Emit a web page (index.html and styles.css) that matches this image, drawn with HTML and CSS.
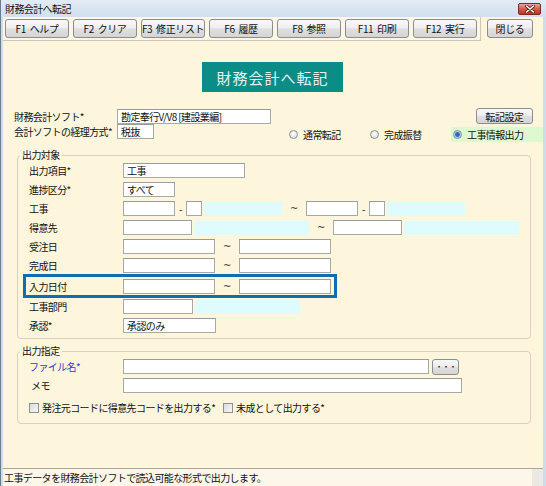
FILE: index.html
```html
<!DOCTYPE html>
<html lang="ja">
<head>
  <meta charset="UTF-8">
  <title>財務会計へ転記</title>
  <link rel="stylesheet" href="styles.css">
</head>
<body>

  <div class="window">
    <div class="titlebar">
      <span class="title">財務会計へ転記</span>
      <span class="xbox">
        <svg width="10" height="8" viewBox="0 0 10 8">
          <path d="M1.5 1 L8.5 7 M8.5 1 L1.5 7" stroke="#5a1a12" stroke-width="3" stroke-linecap="round"/>
          <path d="M1.5 1 L8.5 7 M8.5 1 L1.5 7" stroke="#fff" stroke-width="1.6" stroke-linecap="round"/>
        </svg>
      </span>
    </div>

    <div class="client">
      <div class="toolbar">
        <div class="fkeys">
          <button class="btn fkey">F1 ヘルプ</button>
          <button class="btn fkey">F2 クリア</button>
          <button class="btn fkey">F3 修正リスト</button>
          <button class="btn fkey">F6 履歴</button>
          <button class="btn fkey">F8 参照</button>
          <button class="btn fkey">F11 印刷</button>
          <button class="btn fkey">F12 実行</button>
        </div>
        <button class="btn btn-close">閉じる</button>
      </div>

      <div class="content">
        <div class="heading">財務会計へ転記</div>

        <div class="top-row">
          <span class="top-label">財務会計ソフト*</span>
          <span class="field w154">勘定奉行V/V8 [建設業編]</span>
          <button class="btn btn-setting">転記設定</button>
        </div>

        <div class="top-row row2">
          <span class="top-label">会計ソフトの経理方式*</span>
          <span class="field w37">税抜</span>
          <div class="radios">
            <div class="opt"><span class="radio"></span>通常転記</div>
            <div class="opt"><span class="radio"></span>完成振替</div>
            <div class="opt opt-on"><span class="radio on"></span>工事情報出力</div>
          </div>
        </div>

        <fieldset class="group">
          <legend>出力対象</legend>
          <div class="rows">
            <div class="row">
              <span class="lbl">出力項目*</span>
              <span class="field w122">工事</span>
            </div>
            <div class="row">
              <span class="lbl">進捗区分*</span>
              <span class="field w52">すべて</span>
            </div>
            <div class="row">
              <span class="lbl">工事</span>
              <span class="field w52"></span>
              <span class="sep">-</span>
              <span class="field w16"></span>
              <span class="cyan w78"></span>
              <span class="tilde">~</span>
              <span class="field w52"></span>
              <span class="sep">-</span>
              <span class="field w16"></span>
              <span class="cyan w78"></span>
            </div>
            <div class="row">
              <span class="lbl">得意先</span>
              <span class="field w69"></span>
              <span class="cyan w116"></span>
              <span class="tilde">~</span>
              <span class="field w69"></span>
              <span class="cyan w116"></span>
            </div>
            <div class="row">
              <span class="lbl">受注日</span>
              <span class="field w92"></span>
              <span class="tilde">~</span>
              <span class="field w92"></span>
            </div>
            <div class="row">
              <span class="lbl">完成日</span>
              <span class="field w92"></span>
              <span class="tilde">~</span>
              <span class="field w92"></span>
            </div>
            <div class="row row-hl">
              <span class="lbl">入力日付</span>
              <span class="field w92"></span>
              <span class="tilde">~</span>
              <span class="field w92"></span>
            </div>
            <div class="row">
              <span class="lbl">工事部門</span>
              <span class="field w70"></span>
              <span class="cyan w105"></span>
            </div>
            <div class="row">
              <span class="lbl">承認*</span>
              <span class="field w93">承認のみ</span>
            </div>
          </div>
        </fieldset>

        <fieldset class="group group-out">
          <legend>出力指定</legend>
          <div class="rows">
            <div class="row">
              <span class="lbl lbl-link">ファイル名*</span>
              <span class="field w306"></span>
              <button class="btn btn-browse">・・・</button>
            </div>
            <div class="row">
              <span class="lbl lbl-memo">メモ</span>
              <span class="field w339"></span>
            </div>
            <div class="row row-check">
              <div class="chk-item chk-first"><span class="checkbox"></span>発注元コードに得意先コードを出力する*</div>
              <div class="chk-item"><span class="checkbox"></span>未成として出力する*</div>
            </div>
          </div>
        </fieldset>
      </div>

      <div class="statusbar">
        <span class="status-text">工事データを財務会計ソフトで読込可能な形式で出力します。</span>
        <span class="grip"></span>
      </div>
    </div>
  </div>

</body>
</html>
```

FILE: styles.css
```css
* {
  box-sizing: border-box;
}

body {
  margin: 0;
  font-family: "Noto Sans CJK JP", "Noto Sans", sans-serif;
  font-size: 10px;
  letter-spacing: -0.6px;
  color: #111;
  background: #fff;
}

.window {
  width: 546px;
  height: 486px;
  display: flex;
  flex-direction: column;
  background: #cfdcea;
  border-left: 1px solid #6b7b8e;
}

/* title bar */
.titlebar {
  height: 17px;
  flex: none;
  display: flex;
  align-items: center;
  justify-content: space-between;
  padding: 0 5px 0 4px;
  background: linear-gradient(#e2ebf6, #d2dfee);
}

.title {
  line-height: 13px;
}

.xbox {
  width: 23px;
  height: 12px;
  display: flex;
  align-items: center;
  justify-content: center;
  border: 1px solid #7d2b20;
  border-radius: 2px;
  background: linear-gradient(#eaa79c, #d6584a 50%, #c2321f);
}

.client {
  flex: 1;
  margin: 0 3px 0 2px;
  background: #fdf5dc;
  display: flex;
  flex-direction: column;
}

/* toolbar */
.toolbar {
  height: 24px;
  display: flex;
}

.fkeys {
  width: 478px;
  height: 24px;
  display: flex;
  align-items: center;
  gap: 4px;
  padding-left: 2px;
  background: #fbf6e5;
  border-right: 1px solid #cdc8b6;
  border-bottom: 1px solid #cdc8b6;
}

.btn {
  font: inherit;
  letter-spacing: -0.4px;
  word-spacing: 2px;
  white-space: nowrap;
  color: #111;
  height: 19px;
  padding: 0;
  border: 1px solid #8d8d8d;
  border-radius: 3px;
  background: linear-gradient(#f8f8f8, #efefef 45%, #e0e0e0 52%, #d5d5d5);
  cursor: pointer;
}

.fkey {
  width: 64px;
}

.btn-close {
  width: 46px;
  margin: 2px 0 0 6px;
}

/* main */
.content {
  padding: 21px 12px 0 11px;
}

.heading {
  width: 141px;
  height: 30px;
  margin: 0 auto;
  display: flex;
  align-items: center;
  justify-content: center;
  background: #0b8d87;
  color: #e4f3f1;
  font-size: 15px;
  letter-spacing: 1px;
}

.top-row {
  display: flex;
  align-items: center;
  height: 16px;
  margin-top: 16px;
}

.top-row.row2 {
  margin-top: 0;
  height: 18px;
  align-items: flex-start;
}

.top-label {
  width: 103px;
  white-space: nowrap;
}

.field {
  height: 15px;
  flex: none;
  border: 1px solid #a8a8a8;
  border-top-color: #9a9a9a;
  background: #fff;
  padding-left: 3px;
  line-height: 13px;
  white-space: nowrap;
  overflow: hidden;
}

.w16 { width: 16px; }
.w37 { width: 37px; }
.w52 { width: 52px; }
.w69 { width: 69px; }
.w70 { width: 70px; }
.w78 { width: 78px; }
.w92 { width: 92px; }
.w93 { width: 93px; }
.w105 { width: 105px; }
.w116 { width: 116px; }
.w122 { width: 122px; }
.w154 { width: 154px; }
.w306 { width: 306px; }
.w339 { width: 339px; }

.btn-setting {
  width: 57px;
  height: 16px;
  margin-left: auto;
  margin-right: -2px;
}

/* radio group */
.radios {
  flex: 1;
  display: flex;
  margin-left: 135px;
  margin-right: -12px;
}

.opt {
  width: 81px;
  height: 15px;
  margin-top: 3px;
  display: flex;
  align-items: center;
  gap: 5px;
  white-space: nowrap;
}

.opt-on {
  flex: 1;
  padding-left: 2px;
  background: #def9cf;
}

.radio {
  width: 9px;
  height: 9px;
  flex: none;
  border-radius: 50%;
  border: 1px solid #8e8f8f;
  background: radial-gradient(circle at 50% 40%, #ffffff, #d6d6d6);
}

.radio.on {
  background: radial-gradient(circle, #1d5fae 0, #2f7bd0 2px, #a9cdef 3px, #e6e6e6 4px);
}

/* groups */
.group {
  margin: 7px 0 0 3px;
  min-width: 0;
  padding: 2px 11px 5px 11px;
  border: 1px solid #d6d2c3;
  border-radius: 4px;
}

.group legend {
  padding: 0 2px;
  margin-left: -9px;
  line-height: 12px;
}

.group-out {
  margin-top: 6px;
  padding-bottom: 8px;
}

.rows {
  display: flex;
  flex-direction: column;
  gap: 4px;
}

.row {
  display: flex;
  align-items: center;
  height: 15px;
  white-space: nowrap;
}

.lbl {
  width: 94px;
  flex: none;
}

.lbl-link {
  color: #3636d4;
}

.lbl-memo {
  padding-left: 2px;
}

.sep {
  width: 11px;
  text-align: center;
}

.tilde {
  width: 24px;
  text-align: center;
  font-family: "DejaVu Sans", sans-serif;
  font-size: 10px;
  color: #444;
}

.cyan {
  height: 14px;
  margin-left: 2px;
  background: #defcfe;
}

.row-hl {
  height: 18px;
  width: fit-content;
  margin-left: -3px;
  padding: 2px 3px 1px 3px;
  outline: 3px solid #0f6db5;
}

.btn-browse {
  width: 27px;
  height: 16px;
  margin-left: 3px;
  font-size: 8px;
  letter-spacing: -1px;
}

.row-check {
  margin-top: 3px;
}

.chk-item {
  display: flex;
  align-items: center;
  gap: 3px;
}

.chk-first {
  width: 194px;
}

.checkbox {
  width: 10px;
  height: 10px;
  flex: none;
  border: 1px solid #8f8f8f;
  background: linear-gradient(135deg, #dcdcdc, #f7f7f7);
}

/* status bar */
.statusbar {
  margin-top: auto;
  height: 18px;
  display: flex;
  align-items: center;
  padding-left: 1px;
  border-top: 1px solid #aaa69b;
  background: #fcf7e8;
}

.status-text {
  flex: 1;
}

.grip {
  width: 11px;
  height: 100%;
  background: #ebe9e3;
}
```
